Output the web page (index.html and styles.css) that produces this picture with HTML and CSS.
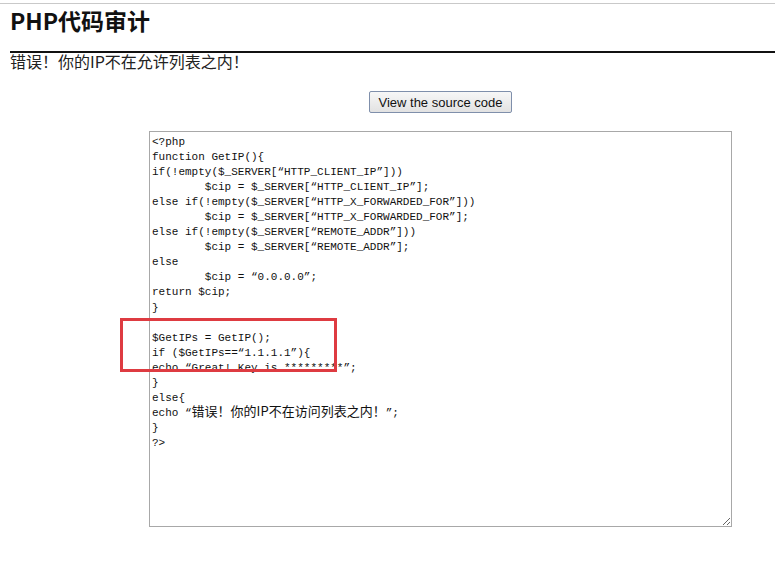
FILE: index.html
```html
<!DOCTYPE html>
<html lang="zh-CN">
<head>
<meta charset="utf-8">
<title>PHP代码审计</title>
<link rel="stylesheet" href="styles.css">
</head>
<body>
<div class="topline"></div>
<div class="page">
  <h1 class="title">PHP代码审计</h1>
  <div class="rule"></div>
  <p class="msg">错误！你的IP不在允许列表之内！</p>
  <div class="center">
    <button class="btn" type="button">View the source code</button>
    <div class="code">&lt;?php
function GetIP(){
if(!empty($_SERVER[“HTTP_CLIENT_IP”]))
        $cip = $_SERVER[“HTTP_CLIENT_IP”];
else if(!empty($_SERVER[“HTTP_X_FORWARDED_FOR”]))
        $cip = $_SERVER[“HTTP_X_FORWARDED_FOR”];
else if(!empty($_SERVER[“REMOTE_ADDR”]))
        $cip = $_SERVER[“REMOTE_ADDR”];
else
        $cip = “0.0.0.0”;
return $cip;
}

$GetIPs = GetIP();
if ($GetIPs==“1.1.1.1”){
echo “Great! Key is *********”;
}
else{
echo “<span class="cjk">错误！你的IP不在访问列表之内！</span>”;
}
?&gt;</div>
  </div>
</div>
<div class="mark"></div>
</body>
</html>
```

FILE: styles.css
```css
html, body {
  margin: 0;
  padding: 0;
  overflow: hidden;
  background: #fff;
}
body {
  width: 775px;
  height: 562px;
  position: relative;
  padding-top: 3px;
  box-sizing: border-box;
  font-family: "Liberation Sans", "Noto Sans CJK SC", sans-serif;
  color: #1a1a1a;
}
.topline {
  height: 0;
  border-top: 1px solid #c9c9c9;
}
.page {
  margin-left: 10px;
  width: 861px;
}
.title {
  margin: 1px 0 0 0;
  font-family: "Noto Sans CJK SC", sans-serif;
  font-weight: 700;
  font-size: 23px;
  line-height: 30px;
  height: 30px;
  color: #111;
}
.rule {
  margin-top: 16px;
  border-top: 2px solid #111;
}
.msg {
  margin: 0;
  font-family: "Noto Sans CJK SC", sans-serif;
  font-size: 16px;
  line-height: 16px;
  color: #222;
}
.center {
  display: flex;
  flex-direction: column;
  align-items: center;
  padding-top: 22px;
}
.btn {
  font-family: "Liberation Sans", Arial, sans-serif;
  font-size: 13px;
  line-height: 15px;
  height: 22px;
  width: 143px;
  margin: 0;
  padding: 0;
  border: 1px solid #7f8fab;
  border-radius: 2px;
  background: linear-gradient(#f7f7f7, #e2e2e2);
  color: #111;
}
.code {
  margin-top: 18px;
  width: 583px;
  height: 396px;
  box-sizing: border-box;
  border: 1px solid #a8a8a8;
  padding: 3px 2px 2px 2px;
  white-space: pre;
  tab-size: 8;
  font-family: "Liberation Mono", monospace;
  font-size: 11px;
  line-height: 15.05px;
  color: #111;
  overflow: auto;
  resize: both;
  text-align: left;
}
.cjk {
  font-family: "Noto Sans CJK SC", sans-serif;
  font-size: 13px;
  line-height: 0;
}
.mark {
  position: absolute;
  left: 120px;
  top: 318px;
  width: 217px;
  height: 54px;
  box-sizing: border-box;
  border: 3px solid #de3b41;
}
```
